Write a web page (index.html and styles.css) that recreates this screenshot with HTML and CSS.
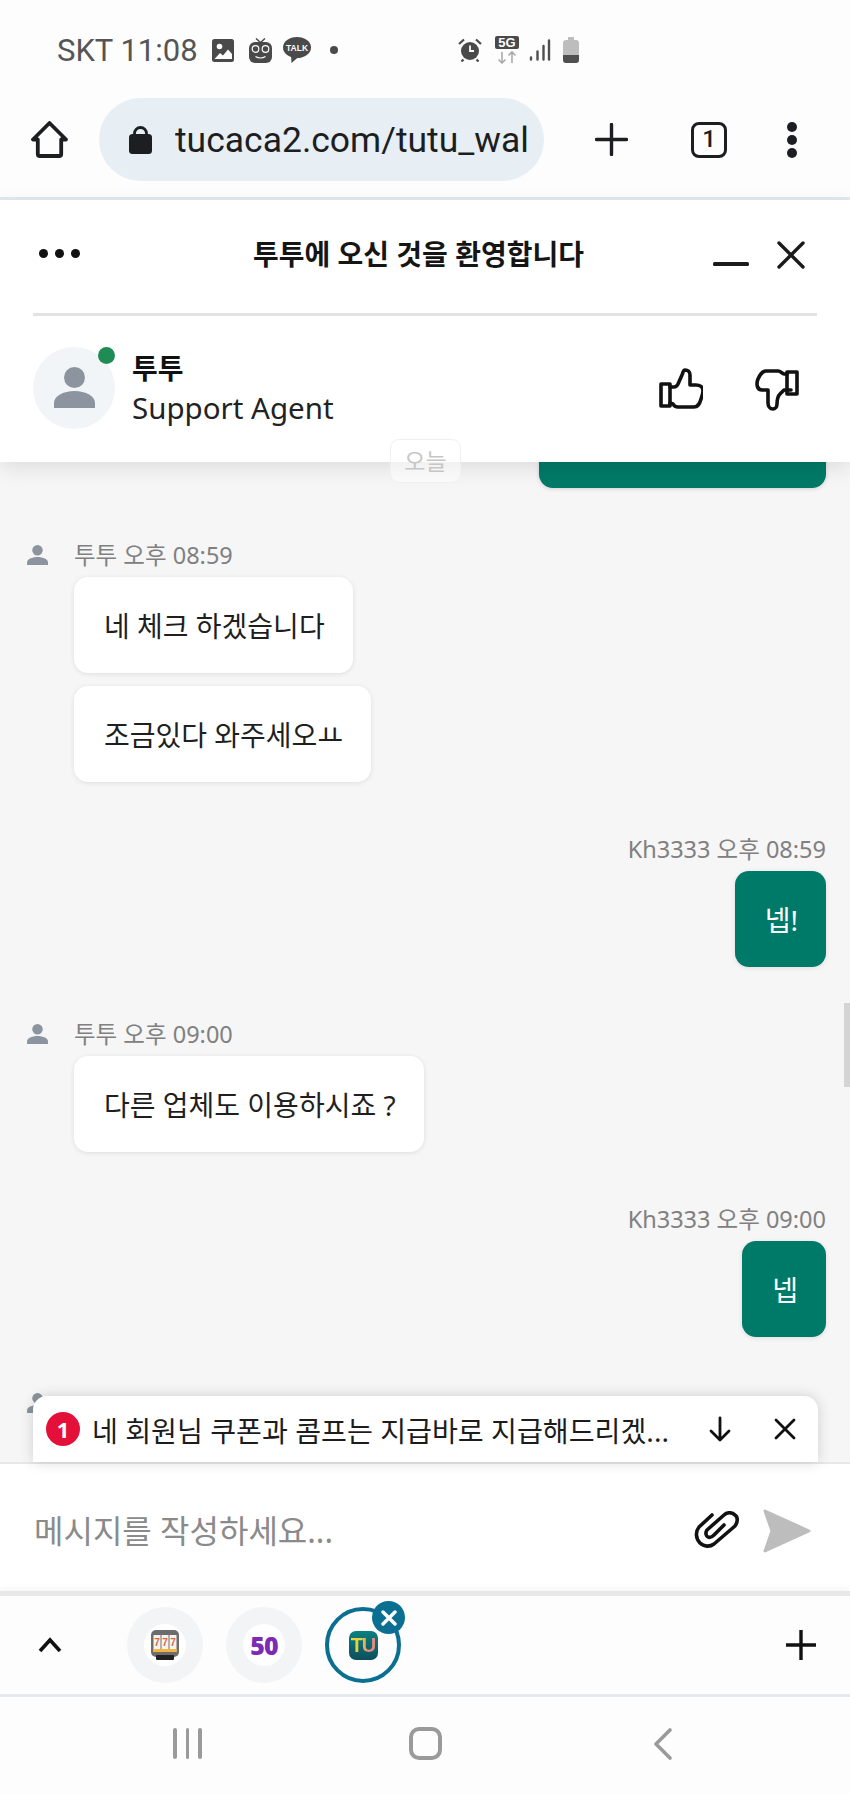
FILE: index.html
```html
<!DOCTYPE html>
<html lang="ko">
<head>
<meta charset="utf-8">
<title>투투</title>
<link rel="stylesheet" href="styles.css">
</head>
<body>
<div class="phone">
  <div class="status">
    <span class="clock">SKT 11:08</span>
    <svg class="ic-img" width="22" height="23" viewBox="0 0 22 23"><rect width="22" height="23" rx="2.500" fill="#4a4a4a"/><circle cx="7.500" cy="7.500" r="2.800" fill="#fdfdfe"/><path d="M2.500 20l5.500-6 3 2.500 5-6 4 4.500v5z" fill="#fdfdfe"/></svg>
    <svg class="ic-robot" width="23" height="25" viewBox="0 0 23 25"><path d="M7 0.500l4.500 4 4.500-4" fill="none" stroke="#4a4a4a" stroke-width="1.500"/><rect y="4" width="23" height="21" rx="6" fill="#4a4a4a"/><circle cx="6.500" cy="11" r="3.300" fill="none" stroke="#fdfdfe" stroke-width="1.200"/><circle cx="16.500" cy="11" r="3.300" fill="none" stroke="#fdfdfe" stroke-width="1.200"/><path d="M6.500 18.500q5 3 10 0" fill="none" stroke="#fdfdfe" stroke-width="1.200"/></svg>
    <svg class="ic-talk" width="28" height="26" viewBox="0 0 28 26"><ellipse cx="14" cy="10.500" rx="14" ry="10.500" fill="#4a4a4a"/><path d="M8 18l0.500 8 7-6z" fill="#4a4a4a"/><text x="14" y="14" class="talk">TALK</text></svg>
    <span class="dot"></span>
    <svg class="ic-alarm" width="24" height="24" viewBox="0 0 24 24"><circle cx="12" cy="13" r="9" fill="#4a4a4a"/><path d="M12 7.500V13h4" fill="none" stroke="#fdfdfe" stroke-width="1.800"/><path d="M1 6l5-4.500M23 6l-5-4.500M5.500 21.500l-2 2M18.500 21.500l2 2" stroke="#4a4a4a" stroke-width="2.200" fill="none"/></svg>
    <svg class="ic-net" width="24" height="28" viewBox="0 0 24 28"><rect width="24" height="13" rx="2" fill="#4a4a4a"/><text x="12" y="11" class="fiveg">5G</text><path d="M7 16v11M3.500 23.500L7 27l3.500-3.500" fill="none" stroke="#aaa" stroke-width="1.600"/><path d="M17 27V16M13.500 19.500L17 16l3.500 3.500" fill="none" stroke="#aaa" stroke-width="1.600"/></svg>
    <svg class="ic-bars" width="22" height="22" viewBox="0 0 22 22"><g stroke="#4f4f4f" stroke-width="2.400" stroke-linecap="round"><path d="M2 20.500v-2M8.500 20.500v-8M14.500 20.500V7M20 20.500V1.500"/></g></svg>
    <svg class="ic-batt" width="16" height="26" viewBox="0 0 16 26"><path d="M5 0h6v3h2a3 3 0 0 1 3 3v12H0V6a3 3 0 0 1 3-3h2z" fill="#bdbdbd"/><path d="M0 18h16v5a3 3 0 0 1-3 3H3a3 3 0 0 1-3-3z" fill="#4f4f4f"/></svg>
  </div>

  <div class="toolbar">
    <svg class="tb-home" width="37" height="37" viewBox="0 0 37 37"><path d="M18.500 2L2 18.500H6.800V33a2 2 0 0 0 2 2H28.200a2 2 0 0 0 2-2V18.500H35z" fill="none" stroke="#1c1e21" stroke-width="3.800" stroke-linejoin="round"/></svg>
    <div class="url">
      <svg class="lock" width="23" height="28" viewBox="0 0 23 28"><path d="M5.500 11V7.500a6 6 0 0 1 12 0V11" fill="none" stroke="#1c1e21" stroke-width="2.800"/><rect y="8" width="23" height="20" rx="3.500" fill="#1c1e21"/></svg>
      <span class="url-text">tucaca2.com/tutu_wal</span>
    </div>
    <svg class="tb-plus" width="33" height="33" viewBox="0 0 33 33"><path d="M16.500 1.500v30M1.500 16.500h30" stroke="#1c1e21" stroke-width="3.400" stroke-linecap="round"/></svg>
    <div class="tabs-count">1</div>
    <div class="kebab"><i></i><i></i><i></i></div>
  </div>

  <div class="head">
    <div class="head-top">
      <div class="more"><i></i><i></i><i></i></div>
      <div class="head-title">투투에 오신 것을 환영합니다</div>
      <svg class="min" width="36" height="6" viewBox="0 0 36 6"><rect y="1" width="36" height="4" rx="1.500" fill="#1b1b1b"/></svg>
      <svg class="close" width="30" height="30" viewBox="0 0 30 30"><path d="M3 3l24 24M27 3L3 27" stroke="#1b1b1b" stroke-width="3.400" stroke-linecap="round"/></svg>
    </div>
    <div class="head-agent">
      <div class="avatar">
        <svg width="41" height="41" viewBox="0 0 41 41"><circle cx="20.500" cy="10.500" r="10.500" fill="#8c959f"/><path d="M0 41v-5c0-7 9-12 20.500-12S41 29 41 36v5z" fill="#8c959f"/></svg>
        <span class="online"></span>
      </div>
      <div class="agent-text">
        <div class="agent-name">투투</div>
        <div class="agent-role">Support Agent</div>
      </div>
      <svg class="thumb" width="44" height="41" viewBox="0 0 44 41"><path d="M2 16h9v22H2z" fill="none" stroke="#111" stroke-width="3.600" stroke-linejoin="round"/><path d="M11 19h4c2 0 3-1 4-3l4-9c1-2 1-5 3-5 3 0 5 2 5 5v10h6c4 0 7 2 7 6 0 2-1 5-2 8-1 4-3 8-7 8H19c-3 0-4-1-5-3l-3-1" fill="none" stroke="#111" stroke-width="3.600" stroke-linejoin="round" stroke-linecap="round"/></svg>
      <svg class="thumb thumb-down" width="44" height="42" viewBox="0 0 44 42"><path d="M32 3h10v22H32z" fill="none" stroke="#111" stroke-width="3.600" stroke-linejoin="round"/><path d="M32 5h-3c-2 0-3-3-6-3H11C7 2 5 6 3 10c-2 5-1 11 4 11h6v13c0 3 2 6 5 6 2 0 4-2 4-5 0-3 1-8 3-10l4-4h7" fill="none" stroke="#111" stroke-width="3.600" stroke-linejoin="round" stroke-linecap="round"/></svg>
    </div>
  </div>

  <div class="chat">
    <div class="today">오늘</div>
    <div class="top-bubble"></div>

    <div class="meta-in m1"><svg width="21" height="20" viewBox="0 0 22 21"><ellipse cx="11" cy="5.500" rx="5.500" ry="5.500" fill="#8c959f"/><path d="M0 21v-3c0-3 5-5.500 11-5.500S22 15 22 18v3z" fill="#8c959f"/></svg><span>투투 오후 08:59</span></div>
    <div class="bubble in">네 체크 하겠습니다</div>
    <div class="bubble in b2">조금있다 와주세오ㅛ</div>

    <div class="meta-out m2">Kh3333 오후 08:59</div>
    <div class="bubble out">넵!</div>

    <div class="meta-in m3"><svg width="21" height="20" viewBox="0 0 22 21"><ellipse cx="11" cy="5.500" rx="5.500" ry="5.500" fill="#8c959f"/><path d="M0 21v-3c0-3 5-5.500 11-5.500S22 15 22 18v3z" fill="#8c959f"/></svg><span>투투 오후 09:00</span></div>
    <div class="bubble in">다른 업체도 이용하시죠 ?</div>

    <div class="meta-out m4">Kh3333 오후 09:00</div>
    <div class="bubble out">넵</div>

    <svg class="peek" width="21" height="20" viewBox="0 0 22 21"><ellipse cx="11" cy="5.500" rx="5.500" ry="5.500" fill="#8c959f"/><path d="M0 21v-3c0-3 5-5.500 11-5.500S22 15 22 18v3z" fill="#8c959f"/></svg>

    <div class="scrollbar"></div>

    <div class="notice">
      <span class="badge">1</span>
      <span class="notice-text">네 회원님 쿠폰과 콤프는 지급바로 지급해드리겠...</span>
      <svg class="n-down" width="24" height="26" viewBox="0 0 24 26"><path d="M12 2v22M3 15l9 9 9-9" fill="none" stroke="#111" stroke-width="2.800" stroke-linecap="round" stroke-linejoin="round"/></svg>
      <svg class="n-close" width="24" height="24" viewBox="0 0 24 24"><path d="M3 3l18 18M21 3L3 21" stroke="#111" stroke-width="2.800" stroke-linecap="round"/></svg>
    </div>
  </div>

  <div class="composer">
    <span class="placeholder">메시지를 작성하세요...</span>
    <svg class="clip" width="46" height="39" viewBox="0 0 46 39"><path d="M18 4L5 16C1 21 2 28 6 32C10 36 16 36 20 33L41 15C44 11 44 6 41 4C38 1 33 1 30 4L13 19C11 22 12 25 14 26C16 27 18 26 20 24L30 14" fill="none" stroke="#111" stroke-width="3.600" stroke-linecap="round" stroke-linejoin="round"/></svg>
    <svg class="send" width="48" height="44" viewBox="0 0 48 44"><path d="M2 2l44 20L2 42l7-20z" fill="#bdbdbd" stroke="#bdbdbd" stroke-width="3" stroke-linejoin="round"/></svg>
  </div>

  <div class="dock">
    <svg class="chev" width="26" height="16" viewBox="0 0 26 16"><path d="M3 14L13 3l10 11" fill="none" stroke="#111" stroke-width="3.600"/></svg>
    <div class="app-list">
      <div class="app">
        <div class="app-inner">
          <svg width="28" height="30" viewBox="0 0 28 30"><rect y="0" width="28" height="27" rx="5" fill="#6d6d6d"/><rect x="2.500" y="5" width="7" height="17" fill="#f6f3f0"/><rect x="10.500" y="5" width="7" height="17" fill="#f6f3f0"/><rect x="18.500" y="5" width="7" height="17" fill="#f6f3f0"/><rect x="2.500" y="19" width="23" height="3" fill="#f3b53d"/><rect x="5" y="25" width="18" height="5" rx="1" fill="#222"/><text x="6" y="16" class="sev">7</text><text x="14" y="16" class="sev">7</text><text x="22" y="16" class="sev">7</text></svg>
        </div>
      </div>
      <div class="app">
        <div class="app-inner"><span class="fifty">50</span></div>
      </div>
      <div class="app active">
        <div class="tu"><span class="tu-text">TU</span></div>
        <div class="app-x"><svg width="16" height="16" viewBox="0 0 16 16"><path d="M2 2l12 12M14 2L2 14" stroke="#fff" stroke-width="3.400" stroke-linecap="round"/></svg></div>
      </div>
    </div>
    <svg class="dock-plus" width="30" height="30" viewBox="0 0 30 30"><path d="M15 0v30M0 15h30" stroke="#111" stroke-width="3.400"/></svg>
  </div>

  <div class="nav">
    <div class="nav-recent"><i></i><i></i><i></i></div>
    <div class="nav-home"></div>
    <svg class="nav-back" width="20" height="32" viewBox="0 0 20 32"><path d="M17 2L3 16l14 14" fill="none" stroke="#9a9a9a" stroke-width="3.600" stroke-linecap="round" stroke-linejoin="round"/></svg>
  </div>
</div>
</body>
</html>
```
FILE: styles.css
```css
* { box-sizing: border-box; }
html, body { margin: 0; padding: 0; }
body { width: 850px; height: 1794px; overflow: hidden; background: #fdfdfe; font-family: "Noto Sans", "Noto Sans CJK KR", sans-serif; }
.phone { width: 850px; height: 1794px; display: flex; flex-direction: column; }

.status { height: 78px; flex: none; display: flex; align-items: center; padding: 22px 0 0 57px; background: #fdfdfe; }
.clock { font-family: Roboto, sans-serif; font-size: 31px; color: #555; width: 140px; white-space: nowrap; flex: none; }
.status svg { flex: none; }
.ic-img { margin-left: 15px; }
.ic-robot { margin-left: 15px; }
.ic-talk { margin-left: 11px; }
.talk { font: 700 8.5px "Liberation Sans", sans-serif; fill: #fdfdfe; text-anchor: middle; }
.fiveg { font: 700 13px "Liberation Sans", sans-serif; fill: #fdfdfe; text-anchor: middle; }
.dot { width: 8px; height: 8px; border-radius: 50%; background: #4a4a4a; margin-left: 19px; flex: none; }
.ic-alarm { margin-left: 120px; }
.ic-net { margin: -1px 0 0 13px; }
.ic-bars { margin-left: 10px; }
.ic-batt { margin-left: 12px; }

.toolbar { height: 122px; flex: none; display: flex; align-items: center; padding: 4px 0 0 31px; border-bottom: 3px solid #e4e9ee; background: #fdfdfe; }
.tb-home { flex: none; }
.url { width: 445px; height: 83px; margin-left: 31px; border-radius: 42px; background: #e7eef4; display: flex; align-items: center; padding-left: 30px; flex: none; overflow: hidden; }
.lock { flex: none; }
.url-text { font-family: Roboto, sans-serif; font-size: 35.500px; color: #1c1e21; margin-left: 23px; width: 352px; overflow: hidden; white-space: nowrap; flex: none; }
.tb-plus { margin-left: 51px; flex: none; }
.tabs-count { width: 36px; height: 36px; margin-left: 63px; border: 3.500px solid #1c1e21; border-radius: 8px; font: 500 24px/29px Roboto, sans-serif; text-align: center; color: #1c1e21; flex: none; }
.kebab { margin-left: 60px; display: flex; flex-direction: column; gap: 3px; flex: none; }
.kebab i { display: block; width: 10px; height: 10px; border-radius: 50%; background: #1c1e21; }

.head { height: 262px; flex: none; background: #fff; padding: 0 33px; position: relative; z-index: 3; box-shadow: 0 6px 20px rgba(0,0,0,.1); }
.head-top { height: 116px; border-bottom: 3px solid #e2e2e2; display: flex; align-items: center; padding-bottom: 8px; }
.more { display: flex; gap: 7px; margin: 2px 0 0 6px; width: 215px; flex: none; }
.more i { display: block; width: 9px; height: 9px; border-radius: 50%; background: #111; }
.head-title { width: 329px; font-size: 28px; font-weight: 700; color: #151515; white-space: nowrap; flex: none; margin-left: -1px; }
.min { margin: 22px 0 0 131px; flex: none; }
.close { margin: 4px 0 0 27px; flex: none; }

.head-agent { display: flex; align-items: center; padding-top: 30px; }
.avatar { width: 82px; height: 82px; border-radius: 50%; background: #f2f5f8; position: relative; display: flex; align-items: center; justify-content: center; flex: none; }
.online { position: absolute; top: 0; right: 0; width: 17px; height: 17px; border-radius: 50%; background: #1f8c55; }
.agent-text { margin: 3px 0 0 17px; flex: 1; }
.agent-name { font-size: 28px; font-weight: 700; line-height: 38px; color: #111; }
.agent-role { font-size: 29.500px; line-height: 42px; color: #222; }
.thumb { flex: none; margin: 2px 52px 0 0; }
.thumb-down { margin: 5px 18px 0 0; }

.chat { flex: none; height: 1000px; background: #f6f6f6; position: relative; display: flex; flex-direction: column; align-items: flex-start; }
.today { position: absolute; left: 390px; top: -23px; z-index: 4; width: 71px; height: 44px; border: 1px solid #f0f0f0; border-radius: 9px; font-size: 23px; line-height: 42px; text-align: center; color: #c6c6c6; background: rgba(255,255,255,.5); }
.top-bubble { position: absolute; top: -20px; right: 24px; width: 287px; height: 46px; border-radius: 0 0 14px 14px; background: #007a68; box-shadow: 0 1px 4px rgba(0,0,0,.15); }
.meta-in { display: flex; align-items: center; margin-left: 27px; font-size: 23.500px; color: #808080; line-height: 32px; }
.meta-in span { margin-left: 26px; }
.m1 { margin-top: 77px; }
.m3 { margin-top: 51px; }
.meta-out { align-self: flex-end; margin-right: 24px; font-size: 23.500px; line-height: 32px; color: #808080; }
.m2 { margin-top: 51px; }
.m4 { margin-top: 51px; }
.bubble { font-size: 28px; padding: 0 28px 0 30px; border-radius: 14px; margin-top: 6px; white-space: nowrap; height: 96px; display: flex; align-items: center; }
.in { background: #fff; color: #1f1f1f; margin-left: 74px; box-shadow: 0 1px 5px rgba(0,0,0,.1); }
.b2 { margin-top: 13px; }
.out { align-self: flex-end; margin-right: 24px; background: #007a68; color: #fff; box-shadow: 0 1px 5px rgba(0,0,0,.1); }
.peek { position: absolute; left: 27px; top: 931px; }
.scrollbar { position: absolute; right: 0; top: 541px; width: 6px; height: 84px; background: #d4d4d4; }

.notice { position: absolute; left: 33px; top: 934px; width: 785px; height: 66px; background: #fff; border-radius: 14px 14px 0 0; display: flex; align-items: center; padding: 0 0 0 13px; box-shadow: 0 0 14px rgba(0,0,0,.16); }
.badge { width: 34px; height: 34px; border-radius: 50%; background: #e4103a; color: #fff; font-size: 22px; font-weight: 700; line-height: 34px; text-align: center; flex: none; }
.notice-text { margin-left: 12px; font-size: 28.150px; color: #1c1c1c; white-space: nowrap; width: 580px; flex: none; overflow: hidden; }
.n-down { margin-left: 36px; flex: none; }
.n-close { margin-left: 41px; flex: none; }

.composer { height: 129px; flex: none; background: #fff; border-top: 2px solid #e8e8e8; display: flex; align-items: center; padding: 6px 0 0 34px; }
.placeholder { font-size: 32px; color: #8a8a8a; width: 660px; flex: none; margin-bottom: 4px; white-space: nowrap; }
.clip { flex: none; }
.send { flex: none; margin-left: 23px; }

.dock { height: 106px; flex: none; background: #fdfdfe; border-top: 5px solid #e8e8e8; border-bottom: 3px solid #e4e9ee; display: flex; align-items: center; padding-left: 37px; box-shadow: 0 -3px 6px rgba(0,0,0,.04); }
.chev { flex: none; }
.app-list { display: flex; gap: 23px; margin-left: 64px; width: 659px; flex: none; }
.app { width: 76px; height: 76px; border-radius: 50%; background: #f3f4f6; display: flex; align-items: center; justify-content: center; position: relative; flex: none; }
.app-inner { width: 42px; height: 42px; border-radius: 50%; background: #fff; display: flex; align-items: center; justify-content: center; }
.sev { font: 700 10px "Liberation Sans", sans-serif; fill: #e0633a; text-anchor: middle; }
.fifty { font: 800 25px "Open Sans", sans-serif; color: #7a2db4; letter-spacing: -1px; }
.active { background: transparent; border: 4px solid #0b6f92; }
.tu { width: 29px; height: 29px; border-radius: 7px; background: linear-gradient(#0b8080, #0d4f5c); font: 700 20px/29px "Liberation Sans", sans-serif; text-align: center; letter-spacing: -1px; }
.tu-text { background: linear-gradient(100deg, #e8d23c 40%, #e88a80 70%); -webkit-background-clip: text; background-clip: text; color: transparent; }
.app-x { position: absolute; top: -10px; right: -8px; width: 33px; height: 33px; border-radius: 50%; background: #0b6f92; display: flex; align-items: center; justify-content: center; }
.dock-plus { flex: none; }

.nav { flex: 1; background: #fdfdfe; display: flex; align-items: center; padding: 0 0 4px 173px; }
.nav-recent { display: flex; gap: 9px; flex: none; }
.nav-recent i { display: block; width: 3.500px; height: 31px; background: #9a9a9a; border-radius: 2px; }
.nav-home { width: 33px; height: 33px; margin-left: 207px; border: 4px solid #9a9a9a; border-radius: 10px; flex: none; }
.nav-back { margin-left: 211px; flex: none; }
```
